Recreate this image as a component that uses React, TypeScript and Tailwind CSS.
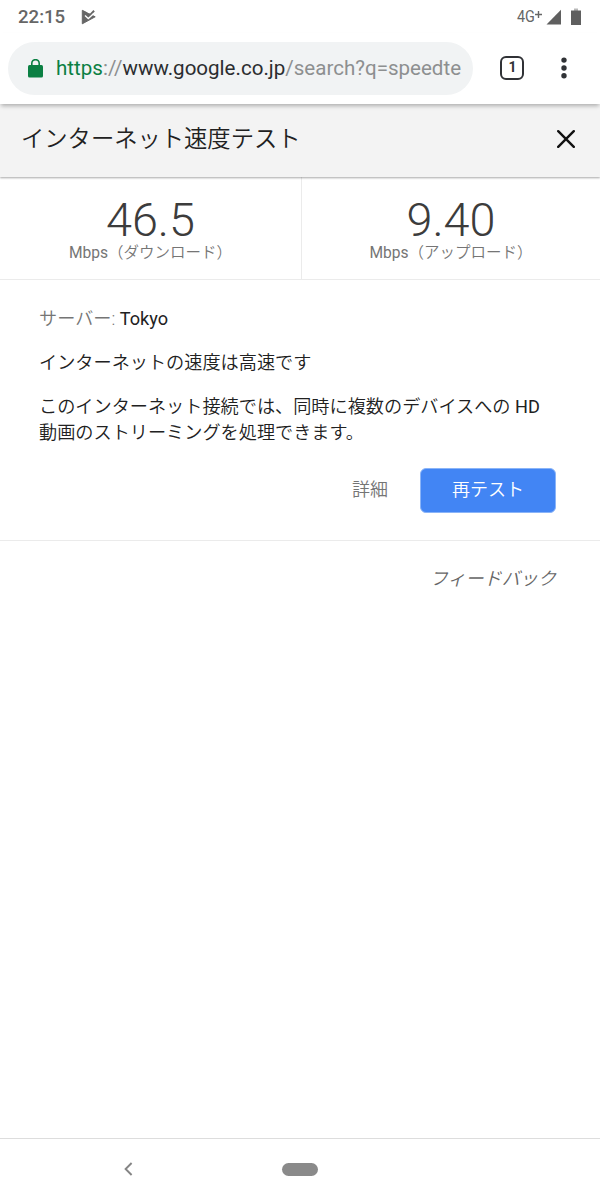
import React from "react";

const bodyText = "text-[18.17px] leading-[26px]";

function StatusBar() {
  return (
    <div className="flex h-[33px] shrink-0 items-center pl-[18px] pr-[19px] text-[#666666]">
      <span className="pt-px text-[18.6px] font-medium leading-none">22:15</span>
      <svg className="ml-[16px]" width="15" height="16" viewBox="0 0 15 16">
        <path d="M1.3 1.3 14.2 7.8 1.3 14.8Z" fill="#666" stroke="#666" strokeLinejoin="round" />
        <path d="M4 0 7.4 4.2 11 0 15 0V6.5L12 6Z" fill="#fff" />
        <path d="M6 5 7.3 6.5 12.4 1 13.8 2.4 9.2 7Z" fill="#666" />
        <path d="m4 6.6 3.3 3 5.5-5" stroke="#fff" strokeWidth="1.3" fill="none" />
      </svg>
      <span className="ml-auto origin-right scale-x-90 text-[16px] leading-none">4G</span>
      <svg className="mb-[5px]" width="7" height="7" viewBox="0 0 7 7">
        <path d="M3.5 0v7M0 3.5h7" stroke="#666" strokeWidth="1.4" />
      </svg>
      <svg className="ml-[4px]" width="16" height="16" viewBox="0 0 16 16">
        <path d="M.5 15.5 15 .7V15.5Z" fill="#5f5f5f" />
      </svg>
      <svg className="ml-[9px]" width="10" height="18" viewBox="0 0 10 18">
        <path d="M3 .5h4V3H3Z" fill="#b8b8b8" />
        <path d="M0 2.5h10V17H0Z" fill="#5f5f5f" />
      </svg>
    </div>
  );
}

function AddressBar() {
  return (
    <div className="z-10 flex h-[71px] shrink-0 items-center bg-white pb-px pl-2 shadow-[0_3px_4px_-1px_rgba(0,0,0,0.28)]">
      <div className="flex h-[53px] w-[465px] items-center rounded-full bg-[#f1f3f4] pl-5">
        <svg width="15" height="19" viewBox="0 0 15 19">
          <rect x="0" y="6" width="15" height="12.4" rx="1.5" fill="#0b8043" />
          <path d="M3.8 7V4.3a3.7 3.7 0 0 1 7.4 0V7" stroke="#0b8043" strokeWidth="1.6" fill="none" />
        </svg>
        <span className="ml-[13px] whitespace-nowrap text-[20.55px] leading-[28px] text-[#2b2d30]">
          <span className="text-[#0b8043]">https</span>
          <span className="text-[#8d8f90]">://</span>www.google.co.jp
          <span className="text-[#8d8f90]">/search?q=speedte</span>
        </span>
      </div>
      <div className="ml-[27px] flex h-6 w-6 items-center justify-center rounded-[6px] border-[2.5px] border-[#303236] text-[#303236]">
        <span className="scale-x-90 text-[15.5px] font-bold leading-none">1</span>
      </div>
      <svg className="ml-[37px]" width="6" height="22" viewBox="0 0 6 22">
        <circle cx="3" cy="3.1" r="2.7" fill="#303236" />
        <circle cx="3" cy="11" r="2.7" fill="#303236" />
        <circle cx="3" cy="18.8" r="2.7" fill="#303236" />
      </svg>
    </div>
  );
}

function Result({ value, label }: { value: string; label: string }) {
  return (
    <div className="flex flex-col items-center pt-[19px]">
      <div className="text-[46.8px] font-light leading-[48px] text-[#3c3c3c]">{value}</div>
      <div className="flex items-baseline text-[15.5px] leading-[18px] text-[#757575]">
        <span className="text-[15.6px]">Mbps</span>
        <span className="font-[350]">{label}</span>
      </div>
    </div>
  );
}

export default function App() {
  return (
    <div className="flex h-[1200px] w-[600px] flex-col overflow-hidden bg-white font-['Roboto','Noto_Sans_CJK_JP',sans-serif] text-[#212121]">
      <StatusBar />
      <AddressBar />
      <div className="z-[5] flex h-[73px] shrink-0 items-center justify-between bg-[#f3f3f3] pl-[21px] pr-[25px] shadow-[0_1px_2px_rgba(0,0,0,0.35)]">
        <h1 className="pb-[3px] text-[23.3px] font-[350] leading-[32px]">インターネット速度テスト</h1>
        <svg className="mb-[3px]" width="18" height="18" viewBox="0 0 18 18">
          <path d="m1.2 1.2 15.6 15.6M16.8 1.2 1.2 16.8" stroke="#111" strokeWidth="2.4" strokeLinecap="round" />
        </svg>
      </div>
      <div className="grid h-[103px] shrink-0 grid-cols-[302px_298px] border-b border-[#ebebeb]">
        <div className="border-r border-[#ebebeb]">
          <Result value="46.5" label="（ダウンロード）" />
        </div>
        <Result value="9.40" label="（アップロード）" />
      </div>
      <div className="h-[261px] shrink-0 border-b border-[#ebebeb] pl-[39px] pr-[44px] pt-[26px]">
        <p className={bodyText}>
          <span className="font-[350] text-[#757575]">サーバー: </span>
          Tokyo
        </p>
        <p className={`mt-[18px] font-[350] ${bodyText}`}>インターネットの速度は高速です</p>
        <p className={`mt-[18px] whitespace-nowrap font-[350] ${bodyText}`}>
          このインターネット接続では、同時に複数のデバイスへの <span className="font-normal">HD</span>
          <br />
          動画のストリーミングを処理できます。
        </p>
        <div className="mt-[22px] flex items-center justify-end gap-8">
          <button className="pb-[2px] text-[18px] font-[350] leading-[26px] text-[#757575]">詳細</button>
          <button className="flex h-[45px] w-[136px] items-center justify-center rounded-[6px] border border-[#8ab4f8] bg-[#4285f4] pb-[2px] text-[18px] font-[350] leading-[26px] text-white">
            再テスト
          </button>
        </div>
      </div>
      <div className="flex justify-end pr-[44px] pt-[25px] text-[18.1px] font-[350] italic leading-[26px] text-[#666666]">
        フィードバック
      </div>
      <div className="mt-auto flex h-[62px] shrink-0 items-center border-t border-[#dddddd] pl-[124px]">
        <svg className="mb-px" width="9" height="14" viewBox="0 0 9 14">
          <path d="M7.6 1 1.6 7l6 6" stroke="#858585" strokeWidth="1.9" fill="none" />
        </svg>
        <div className="mb-px ml-[149px] h-[13px] w-9 rounded-full bg-[#8a8a8a]" />
      </div>
    </div>
  );
}
